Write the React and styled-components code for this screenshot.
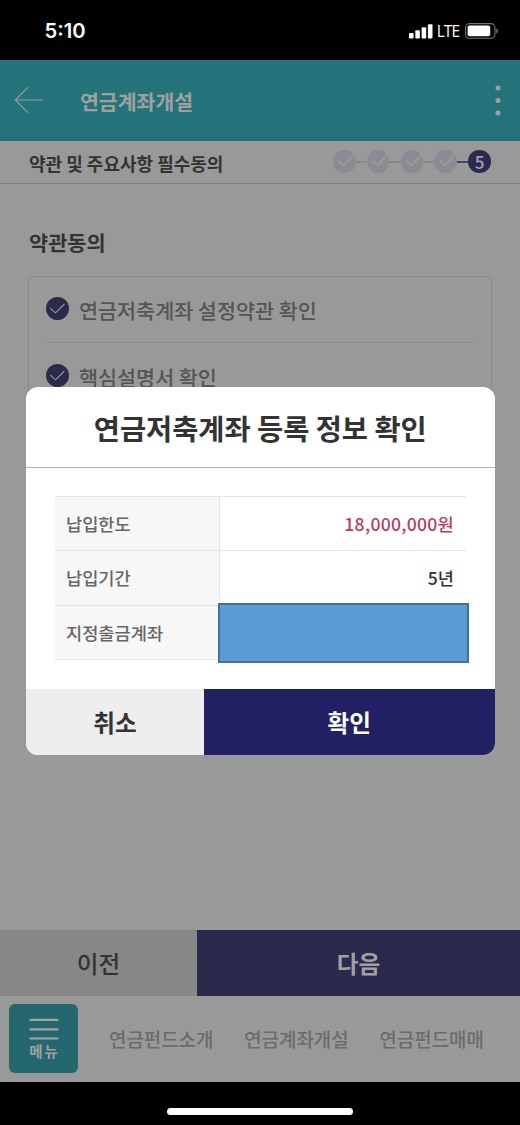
import React from 'react';
import styled, { createGlobalStyle } from 'styled-components';

const GlobalStyle = createGlobalStyle`
  * { box-sizing: border-box; }
  body { margin: 0; background: #000; }
  button { border: 0; padding: 0; font: inherit; color: inherit; background: none; }
`;

const Screen = styled.div`
  position: relative;
  display: flex;
  flex-direction: column;
  width: 520px;
  height: 1125px;
  overflow: hidden;
  background: #000;
  font-family: 'Noto Sans CJK KR', sans-serif;
  white-space: nowrap;
`;

const StatusBar = styled.div`
  display: flex;
  align-items: center;
  flex: none;
  height: 60px;
  padding: 2px 21px 0 44.5px;
  color: #fff;
  font-family: Inter, sans-serif;
`;

const Clock = styled.span`
  flex: 1;
  font-size: 20.2px;
  font-weight: 600;
  line-height: 24px;
`;

const Network = styled.span`
  margin: 0 6px 0 4px;
  font-family: 'Open Sans', sans-serif;
  font-size: 15.5px;
  line-height: 20px;
  letter-spacing: -1px;
`;

const AppHeader = styled.header`
  display: flex;
  align-items: center;
  flex: none;
  height: 80.5px;
  padding: 0 18.7px 0 14px;
  background: #24737a;
  color: #a0a0a0;
`;

const HeaderTitle = styled.h1`
  flex: 1;
  margin: 1px 0 0 37px;
  font-size: 20.5px;
  font-weight: 700;
  line-height: 30px;
`;

const StepBar = styled.div`
  display: flex;
  align-items: center;
  justify-content: space-between;
  flex: none;
  height: 43px;
  padding: 0 29px 0 29px;
  background: #999;
  border-bottom: 1px solid #7f7f7f;
`;

const StepTitle = styled.h2`
  margin: 2px 0 0;
  color: #333;
  font-size: 18px;
  font-weight: 700;
  line-height: 26px;
`;

const Steps = styled.div`
  display: flex;
  align-items: center;
`;

const StepLine = styled.span`
  width: 11.2px;
  height: 2px;
  background: ${(p) => (p.$active ? '#46466a' : '#87878c')};
`;

const Step = styled.span`
  display: flex;
  align-items: center;
  justify-content: center;
  width: 22.7px;
  height: 22.7px;
  border-radius: 50%;
  background: ${(p) => (p.$active ? '#2a2a4c' : '#8b8b93')};
  color: #a3a3ac;
  font-size: 17px;
  font-weight: 500;
  line-height: 23px;
`;

const Content = styled.main`
  flex: 1;
  padding: 42px 28.5px 0 28px;
  background: #999;
`;

const SectionTitle = styled.h3`
  margin: 0 0 18px 1px;
  color: #333;
  font-size: 20.8px;
  font-weight: 700;
  line-height: 32px;
`;

const TermsBox = styled.ul`
  height: 240px;
  margin: 0;
  padding: 0 16.5px;
  border: 1px solid #8a8a8a;
  border-radius: 4px;
  list-style: none;
`;

const Term = styled.li`
  display: flex;
  align-items: center;
  height: 66.8px;
  gap: 10.5px;
  border-bottom: 1px solid #8c8c8c;
  color: #555;
  font-size: 20.7px;
  font-weight: 500;
  line-height: 30px;

  svg { margin-top: -1px; }
  span { margin-top: 2px; }
`;

const ActionRow = styled.div`
  display: flex;
  flex: none;
  height: 66px;
`;

const Action = styled.button`
  width: ${(p) => p.$width || 'auto'};
  flex: ${(p) => (p.$width ? 'none' : '1')};
  background: ${(p) => p.$bg};
  color: ${(p) => p.$color};
  font-size: 23.6px;
  font-weight: ${(p) => p.$weight || 500};
  line-height: 34px;
`;

const TabBar = styled.nav`
  display: flex;
  align-items: center;
  flex: none;
  height: 86.5px;
  padding-left: 9px;
  background: #999;
  color: #6b6b6b;
  font-size: 18.9px;
  font-weight: 500;
`;

const MenuButton = styled.button`
  display: flex;
  flex-direction: column;
  align-items: center;
  width: 69px;
  height: 69px;
  padding-top: 14px;
  border-radius: 6px;
  background: #24676e;
  color: #a0a0a0;
  font-size: 14.5px;
  font-weight: 700;
  line-height: 20px;
  letter-spacing: 2px;

  span { margin: 1px -2px 0 0; }
`;

const Tab = styled.a`
  margin-left: 31px;
  line-height: 28px;
`;

const HomeArea = styled.div`
  display: flex;
  justify-content: center;
  flex: none;
  height: 43px;
  padding-top: 26px;
`;

const HomeIndicator = styled.div`
  width: 186px;
  height: 7px;
  border-radius: 4px;
  background: #fff;
`;

const Dialog = styled.section`
  position: absolute;
  top: 387px;
  left: 26px;
  display: flex;
  flex-direction: column;
  width: 468.5px;
  height: 368.3px;
  border-radius: 12px;
  overflow: hidden;
  background: #fff;
`;

const DialogTitle = styled.h2`
  flex: none;
  height: 81px;
  margin: 0;
  padding-top: 20px;
  border-bottom: 1px solid #b2b2b2;
  color: #333;
  font-size: 28.4px;
  font-weight: 700;
  line-height: 42px;
  text-align: center;
`;

const InfoTable = styled.dl`
  flex: 1;
  margin: 28px 28.5px 0 29px;
`;

const InfoRow = styled.div`
  display: flex;
  height: 54.4px;
  border-top: 1px solid #e4e4e4;
  line-height: 54px;
  font-size: 17.6px;
  font-weight: 500;

  &:last-child { height: 55.6px; border-bottom: 1px solid #e4e4e4; }
`;

const InfoLabel = styled.dt`
  flex: none;
  width: 165px;
  padding-left: 11px;
  border-right: 1px solid #e4e4e4;
  background: #f7f7f7;
  color: #666;
`;

const InfoValue = styled.dd`
  flex: 1;
  margin: 0;
  padding-right: 12px;
  color: ${(p) => (p.$accent ? '#b93a69' : '#333')};
  letter-spacing: ${(p) => (p.$accent ? '0.25px' : '0')};
  text-align: right;
`;

const AccountMask = styled.div`
  position: relative;
  top: -3px;
  left: -2px;
  flex: none;
  width: 251px;
  height: 60px;
  border: 2px solid #41719c;
  background: #5b9bd5;
`;

const CheckIcon = () => (
  <svg width="23" height="23" viewBox="0 0 23 23" fill="none">
    <circle cx="11.5" cy="11.5" r="11.5" fill="#2a2a4c" />
    <path d="M4.2 11.2L9.6 15.8L18.4 7" stroke="#999" strokeWidth="1.1" />
  </svg>
);

const StepCheck = () => (
  <svg width="23" height="23" viewBox="0 0 23 23" fill="none">
    <path d="M5.5 10.5L10.8 15.6L20.5 5" stroke="#9a9aa0" strokeWidth="1.8" />
  </svg>
);

const BackIcon = () => (
  <svg width="29" height="28" viewBox="0 0 29 28" fill="none" stroke="#9b9b9b" strokeWidth="1.1">
    <path d="M28.5 14H1.5M14 1.3L1.3 14L14 26.7" />
  </svg>
);

const MoreIcon = () => (
  <svg width="6" height="32" viewBox="0 0 6 32" fill="#a0a0a0">
    <circle cx="3" cy="3.9" r="2.5" />
    <circle cx="3" cy="16.4" r="2.5" />
    <circle cx="3" cy="28.9" r="2.5" />
  </svg>
);

const SignalIcon = () => (
  <svg width="24" height="15" viewBox="0 0 24 15" fill="#fff">
    <rect x="0" y="9" width="4.6" height="5.6" rx="1" />
    <rect x="6.3" y="6.3" width="4.6" height="8.3" rx="1" />
    <rect x="12.6" y="3.2" width="4.6" height="11.4" rx="1" />
    <rect x="18.9" y="0.2" width="4.6" height="14.4" rx="1" />
  </svg>
);

const BatteryIcon = () => (
  <svg width="34" height="16" viewBox="0 0 34 16" fill="none">
    <rect x="0.6" y="0.6" width="29.4" height="14.6" rx="4" stroke="#777" strokeWidth="1.1" />
    <rect x="2.6" y="2.5" width="22.6" height="10.8" rx="2" fill="#fff" />
    <path d="M31.4 5.4C33.4 6 33.4 9.8 31.4 10.4Z" fill="#888" />
  </svg>
);

const MenuIcon = () => (
  <svg width="30" height="22" viewBox="0 0 30 22" stroke="#a3a3a3" strokeWidth="2.2" strokeLinecap="round">
    <path d="M1.5 1.9H28.5M1.5 11.4H28.5M1.5 20.5H28.5" />
  </svg>
);

const terms = ['연금저축계좌 설정약관 확인', '핵심설명서 확인'];
const tabs = ['연금펀드소개', '연금계좌개설', '연금펀드매매'];

export default function App() {
  return (
    <Screen>
      <GlobalStyle />
      <StatusBar>
        <Clock>5:10</Clock>
        <SignalIcon />
        <Network>LTE</Network>
        <BatteryIcon />
      </StatusBar>
      <AppHeader>
        <BackIcon />
        <HeaderTitle>연금계좌개설</HeaderTitle>
        <MoreIcon />
      </AppHeader>
      <StepBar>
        <StepTitle>약관 및 주요사항 필수동의</StepTitle>
        <Steps>
          {[1, 2, 3, 4].map((n) => (
            <React.Fragment key={n}>
              <Step><StepCheck /></Step>
              <StepLine $active={n === 4} />
            </React.Fragment>
          ))}
          <Step $active>5</Step>
        </Steps>
      </StepBar>
      <Content>
        <SectionTitle>약관동의</SectionTitle>
        <TermsBox>
          {terms.map((t) => (
            <Term key={t}><CheckIcon /><span>{t}</span></Term>
          ))}
        </TermsBox>
      </Content>
      <ActionRow>
        <Action $width="197px" $bg="#878787" $color="#333">이전</Action>
        <Action $bg="#2a2a4c" $color="#a0a0a0" $weight={700}>다음</Action>
      </ActionRow>
      <TabBar>
        <MenuButton><MenuIcon /><span>메뉴</span></MenuButton>
        {tabs.map((t) => <Tab key={t}>{t}</Tab>)}
      </TabBar>
      <HomeArea><HomeIndicator /></HomeArea>
      <Dialog role="dialog">
        <DialogTitle>연금저축계좌 등록 정보 확인</DialogTitle>
        <InfoTable>
          <InfoRow>
            <InfoLabel>납입한도</InfoLabel>
            <InfoValue $accent>18,000,000원</InfoValue>
          </InfoRow>
          <InfoRow>
            <InfoLabel>납입기간</InfoLabel>
            <InfoValue>5년</InfoValue>
          </InfoRow>
          <InfoRow>
            <InfoLabel>지정출금계좌</InfoLabel>
            <AccountMask />
          </InfoRow>
        </InfoTable>
        <ActionRow>
          <Action $width="178px" $bg="#eee" $color="#333" $weight={700}>취소</Action>
          <Action $bg="#212164" $color="#fff" $weight={700}>확인</Action>
        </ActionRow>
      </Dialog>
    </Screen>
  );
}
